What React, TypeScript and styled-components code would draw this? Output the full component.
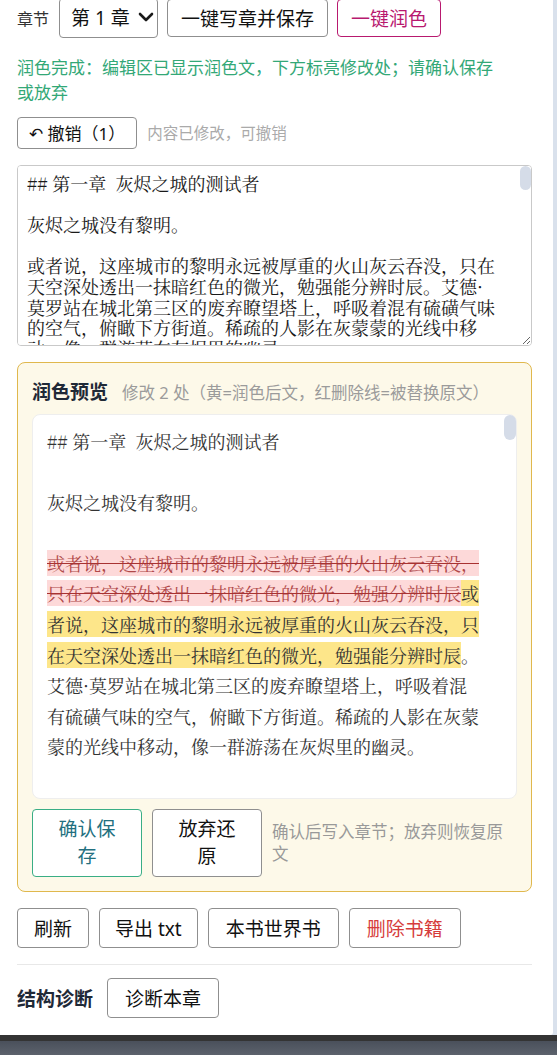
import React from 'react';
import styled, { createGlobalStyle } from 'styled-components';
import { ChevronDown } from 'lucide-react';

const sans = `"Noto Sans", "Noto Sans CJK SC", sans-serif`;
const serif = `"Noto Serif CJK SC", "Noto Sans CJK SC", serif`;

const GlobalStyle = createGlobalStyle`
  html, body {
    margin: 0;
    padding: 0;
  }
  body {
    font-family: ${sans};
    color: #333;
    background: #d9e1ec;
  }
`;

type Tone = 'plain' | 'accent' | 'confirm' | 'danger';

const toneColors: Record<Tone, { border: string; text: string }> = {
  plain: { border: '#8f8f8f', text: '#111' },
  accent: { border: '#b8196f', text: '#b8196f' },
  confirm: { border: '#3aae85', text: '#23707f' },
  danger: { border: '#8f8f8f', text: '#d63c3c' },
};

const TITLE = '## 第一章  灰烬之城的测试者';
const OPENING = '灰烬之城没有黎明。';
const OLD_LINE = '或者说，这座城市的黎明永远被厚重的火山灰云吞没，只在天空深处透出一抹暗红色的微光，勉强分辨时辰';
const NEW_LINE = '或者说，这座城市的黎明永远被厚重的火山灰云吞没，只在天空深处透出一抹暗红色的微光，勉强能分辨时辰';
const TAIL =
  '。艾德·莫罗站在城北第三区的废弃瞭望塔上，呼吸着混有硫磺气味的空气，俯瞰下方街道。稀疏的人影在灰蒙蒙的光线中移动，像一群游荡在灰烬里的幽灵。';

const MORE = [
  '他叫艾德·莫罗，二十三岁，是灰烬之城第七批测试者中唯一活下来的人。',
  '三天前，城防署的信使把一封烫着黑色火漆的信塞进他的门缝。信上只有一行字：明日辰时，北区瞭望塔，带上你的钥匙。',
  '艾德没有钥匙。至少，他不记得自己有过什么钥匙。',
  '风从废墟的缺口灌进来，卷起一层细细的灰。他眯起眼睛，看见远处的钟楼顶端亮起了一盏昏黄的灯。',
  '那盏灯已经熄灭了整整十年。',
  '他握紧了栏杆，铁锈在掌心留下暗红的痕迹，像一道尚未愈合的伤口。塔下的街道上，有人停下脚步，抬头望向钟楼。',
];

const editorText = [TITLE, OPENING, NEW_LINE + TAIL, ...MORE].join('\n\n');

export default function App() {
  return (
    <Screen>
      <GlobalStyle />
      <Workspace>
        <Panel>
          <Toolbar>
            <Label>章节</Label>
            <SelectWrap>
              <ChapterSelect defaultValue="1">
                <option value="1">第 1 章</option>
                <option value="2">第 2 章</option>
              </ChapterSelect>
              <SelectArrow size={24} strokeWidth={2.6} />
            </SelectWrap>
            <Button $h={38} $pad={13}>一键写章并保存</Button>
            <Button $h={38} $pad={13} $tone="accent">
              一键润色
            </Button>
          </Toolbar>

          <Notice>润色完成：编辑区已显示润色文，下方标亮修改处；请确认保存或放弃</Notice>

          <UndoRow>
            <Button $h={32} $pad={11} $size={17}>
              ↶ 撤销（1）
            </Button>
            <Hint>内容已修改，可撤销</Hint>
          </UndoRow>

          <Scroller $gap={16}>
            <Editor defaultValue={editorText} spellCheck={false} />
            <ScrollThumb $w={11} $h={24} />
          </Scroller>

          <PreviewCard>
            <PreviewHeader>
              <PreviewTitle>润色预览</PreviewTitle>
              <PreviewMeta>修改 2 处（黄=润色后文，红删除线=被替换原文）</PreviewMeta>
            </PreviewHeader>
            <Scroller>
              <PreviewBody>
                {`${TITLE}\n\n${OPENING}\n\n`}
                <Removed>{OLD_LINE}</Removed>
                <Added>{NEW_LINE}</Added>
                {TAIL}
              </PreviewBody>
              <ScrollThumb $w={12} $h={25} />
            </Scroller>
            <ActionRow>
              <ActionButton $tone="confirm">确认保存</ActionButton>
              <ActionButton>放弃还原</ActionButton>
              <ActionHint>确认后写入章节；放弃则恢复原文</ActionHint>
            </ActionRow>
          </PreviewCard>

          <ButtonRow>
            <Button $pad={16}>刷新</Button>
            <Button $pad={15}>导出 txt</Button>
            <Button $pad={17}>本书世界书</Button>
            <Button $pad={17} $tone="danger">
              删除书籍
            </Button>
          </ButtonRow>

          <Divider />

          <DiagRow>
            <SectionTitle>结构诊断</SectionTitle>
            <Button $pad={17}>诊断本章</Button>
          </DiagRow>
        </Panel>
      </Workspace>
      <Taskbar />
    </Screen>
  );
}

const Screen = styled.div`
  display: flex;
  flex-direction: column;
  min-height: 100vh;
`;

const Workspace = styled.main`
  flex: 1;
  display: flex;
  background: #d9e1ec;
  overflow: hidden;
`;

const Panel = styled.section`
  width: 553px;
  box-sizing: border-box;
  padding: 0 21px 0 17px;
  background: #fff;
  border-bottom-right-radius: 3px;
`;

const Toolbar = styled.div`
  display: flex;
  align-items: center;
  gap: 9px;
  height: 40px;
  margin-top: -2px;
`;

const Label = styled.span`
  font-size: 16px;
  color: #333;
  margin-right: 1px;
`;

const SelectWrap = styled.div`
  position: relative;
  flex: none;
`;

const ChapterSelect = styled.select`
  display: block;
  width: 99px;
  height: 40px;
  padding: 0 24px 0 11px;
  appearance: none;
  font-family: ${sans};
  font-size: 19px;
  color: #111;
  background: #fff;
  border: 1px solid #8f8f8f;
  border-radius: 4px;
`;

const SelectArrow = styled(ChevronDown)`
  position: absolute;
  top: 7px;
  right: 0;
  color: #1a1a1a;
  pointer-events: none;
`;

const Button = styled.button<{ $tone?: Tone; $h?: number; $pad?: number; $size?: number }>`
  flex: none;
  height: ${(p) => p.$h ?? 40}px;
  padding: 0 ${(p) => p.$pad ?? 16}px;
  font-family: ${sans};
  font-size: ${(p) => p.$size ?? 19}px;
  color: ${(p) => toneColors[p.$tone ?? 'plain'].text};
  background: #fff;
  border: 1px solid ${(p) => toneColors[p.$tone ?? 'plain'].border};
  border-radius: 4px;
  white-space: nowrap;
  cursor: pointer;
`;

const Notice = styled.p`
  margin: 16.5px 24px 0 0;
  font-size: 17px;
  line-height: 25.5px;
  color: #33a877;
`;

const UndoRow = styled.div`
  display: flex;
  align-items: center;
  gap: 10px;
  margin-top: 11px;
`;

const Hint = styled.span`
  font-size: 15.5px;
  color: #aaa;
`;

/* wraps a scrolling box so its thin scrollbar thumb can sit over the right edge */
const Scroller = styled.div<{ $gap?: number }>`
  position: relative;
  margin-top: ${(p) => p.$gap ?? 0}px;
`;

const ScrollThumb = styled.span<{ $w: number; $h: number }>`
  position: absolute;
  top: 1px;
  right: 1px;
  width: ${(p) => p.$w}px;
  height: ${(p) => p.$h}px;
  border-radius: 6px;
  background: #d5dce8;
  pointer-events: none;
`;

const Editor = styled.textarea`
  display: block;
  width: 100%;
  height: 181px;
  box-sizing: border-box;
  padding: 7px 34px 7px 9px;
  font-family: ${serif};
  font-size: 18px;
  line-height: 20.7px;
  color: #1a1a1a;
  border: 1px solid #c9c9c9;
  border-radius: 4px;
  resize: vertical;
`;

const PreviewCard = styled.div`
  margin-top: 16px;
  padding: 16px 14px 14px;
  background: #fdf9e9;
  border: 1px solid #e0b84d;
  border-radius: 8px;
`;

const PreviewHeader = styled.div`
  display: flex;
  align-items: baseline;
  gap: 14px;
  line-height: 26px;
  margin-bottom: 8px;
`;

const PreviewTitle = styled.h3`
  margin: 0;
  font-size: 19px;
  font-weight: 700;
  color: #1f2937;
`;

const PreviewMeta = styled.span`
  font-size: 16.5px;
  color: #9b9b9b;
`;

const PreviewBody = styled.div`
  height: 385px;
  box-sizing: border-box;
  overflow-y: auto;
  padding: 11px 35px 11px 14px;
  background: #fff;
  border: 1px solid #eee;
  border-radius: 8px;
  font-family: ${serif};
  font-size: 18px;
  line-height: 30.6px;
  color: #333;
  white-space: pre-wrap;
`;

const Removed = styled.del`
  background: #fdd9d9;
  color: #b04848;
  text-decoration: line-through;
  text-decoration-color: #a83232;
`;

const Added = styled.ins`
  background: #fde68a;
  text-decoration: none;
`;

const ActionRow = styled.div`
  display: flex;
  align-items: center;
  gap: 10px;
  margin-top: 10px;
`;

const ActionButton = styled.button<{ $tone?: Tone }>`
  flex: 0 0 110px;
  padding: 6px 17px;
  font-family: ${sans};
  font-size: 19px;
  line-height: 27px;
  color: ${(p) => toneColors[p.$tone ?? 'plain'].text};
  background: #fff;
  border: 1px solid ${(p) => toneColors[p.$tone ?? 'plain'].border};
  border-radius: 4px;
  cursor: pointer;
`;

const ActionHint = styled.span`
  font-size: 16.5px;
  line-height: 21.6px;
  color: #999;
`;

const ButtonRow = styled.div`
  display: flex;
  gap: 10px;
  margin-top: 16px;
`;

const Divider = styled.hr`
  margin: 16px 0 0;
  border: 0;
  border-top: 1px solid #e8e8e8;
`;

const DiagRow = styled.div`
  display: flex;
  align-items: center;
  gap: 14px;
  margin-top: 13px;
`;

const SectionTitle = styled.h3`
  margin: 0;
  font-size: 19px;
  font-weight: 700;
  color: #1f2937;
`;

const Taskbar = styled.footer`
  height: 20px;
  box-sizing: border-box;
  border-top: 6px solid #343434;
  background: linear-gradient(#4a505b, #5c626c);
`;
